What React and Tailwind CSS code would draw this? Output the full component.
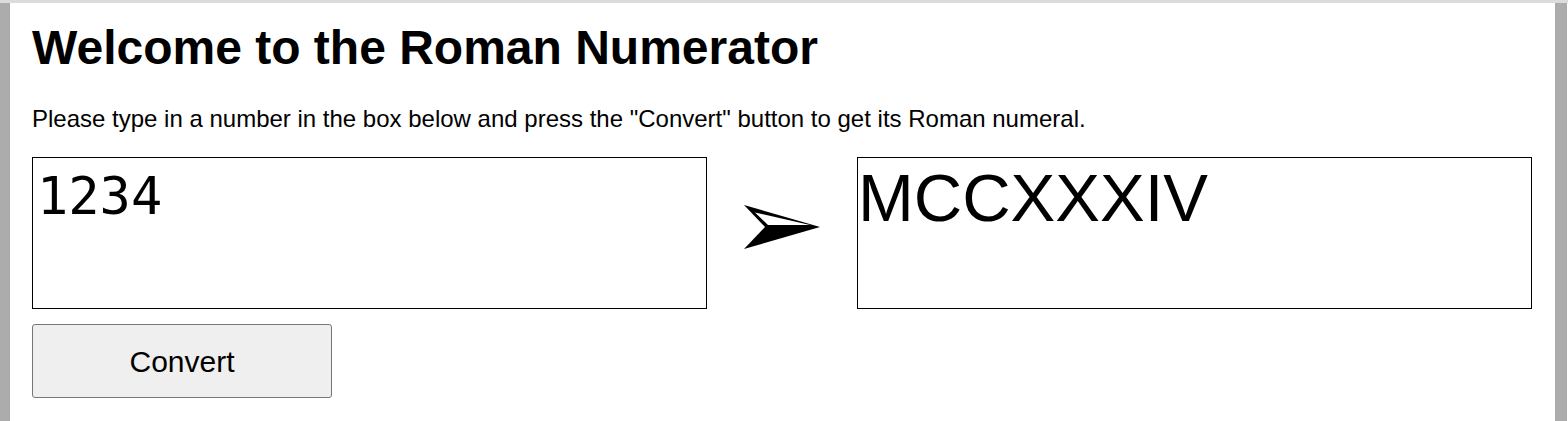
export default function App() {
  return (
    <div className="w-[1568px] h-[421px] bg-white border-t-[3px] border-[#dcdcdc] flex font-['Liberation_Sans',Arial,sans-serif] text-black">
      <div className="w-[10px] bg-[#acacac]" />
      <main className="flex-1 pl-[22px] pt-[17px]">
        <h1 className="text-[48px] font-bold leading-[55px]">Welcome to the Roman Numerator</h1>
        <p className="mt-[30px] text-[24px] leading-[28px]">
          Please type in a number in the box below and press the "Convert" button to get its Roman numeral.
        </p>
        <div className="mt-[24px] grid grid-cols-[675px_150px_675px]">
          <div className="h-[152px] border border-black pl-[4px] pt-[12px] font-['DejaVu_Sans_Mono',monospace] text-[52px] leading-[52px]">
            1234
          </div>
          <div className="flex items-center justify-center">
            <svg width="80" height="48" viewBox="0 0 80 48" className="mb-[12px]">
              <path d="M2 2 L78 24 L23 24 Z" fill="#000" />
              <path d="M13 9.5 L68 22 L26 22 Z" fill="#fff" />
              <path d="M23 24 L78 24 L2 46 Z" fill="#000" />
            </svg>
          </div>
          <div className="h-[152px] border border-black pt-[6px] text-[67px] leading-[67px]">MCCXXXIV</div>
        </div>
        <button className="mt-[15px] w-[300px] h-[74px] bg-[#efefef] border border-[#767676] rounded-[3px] text-[30px]">
          Convert
        </button>
      </main>
      <div className="w-[12px] bg-[#acacac]" />
      <div className="w-[1px]" />
    </div>
  );
}
